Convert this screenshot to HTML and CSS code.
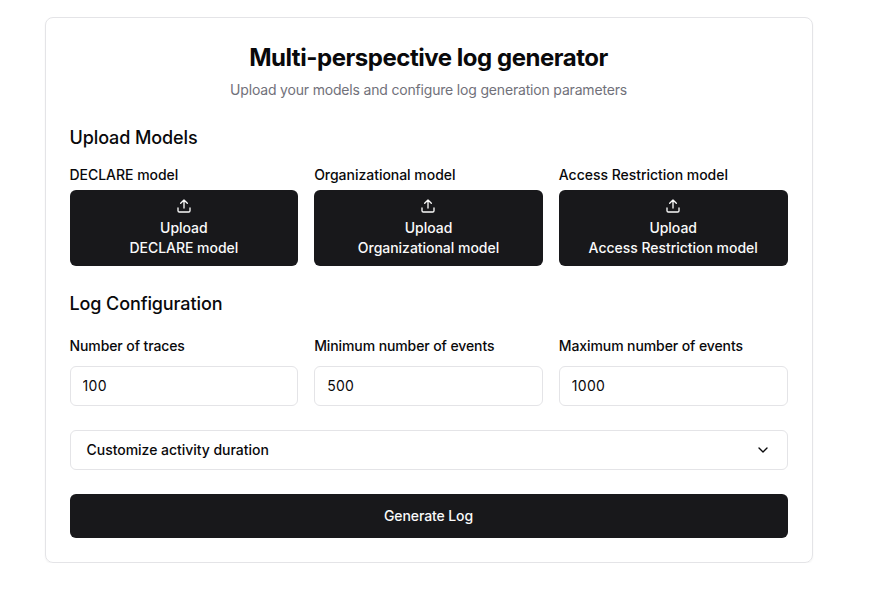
FILE: index.html
```html
<!DOCTYPE html>
<html lang="en">
<head>
<meta charset="utf-8">
<title>Multi-perspective log generator</title>
<link rel="stylesheet" href="styles.css">
</head>
<body>
<main class="card">
  <header>
    <h1>Multi-perspective log generator</h1>
    <p class="sub">Upload your models and configure log generation parameters</p>
  </header>
  <h2 class="h-models">Upload Models</h2>
  <div class="grid">
    <div><label>DECLARE model</label>
      <button class="upload"><svg viewBox="0 0 24 24"><path d="M21 15v4a2 2 0 0 1-2 2H5a2 2 0 0 1-2-2v-4M17 8l-5-5-5 5M12 3v12"/></svg><span>Upload</span><span>DECLARE model</span></button></div>
    <div><label>Organizational model</label>
      <button class="upload"><svg viewBox="0 0 24 24"><path d="M21 15v4a2 2 0 0 1-2 2H5a2 2 0 0 1-2-2v-4M17 8l-5-5-5 5M12 3v12"/></svg><span>Upload</span><span>Organizational model</span></button></div>
    <div><label>Access Restriction model</label>
      <button class="upload"><svg viewBox="0 0 24 24"><path d="M21 15v4a2 2 0 0 1-2 2H5a2 2 0 0 1-2-2v-4M17 8l-5-5-5 5M12 3v12"/></svg><span>Upload</span><span>Access Restriction model</span></button></div>
  </div>
  <h2 class="h-config">Log Configuration</h2>
  <div class="grid fields">
    <div><label>Number of traces</label><input value="100"></div>
    <div><label>Minimum number of events</label><input value="500"></div>
    <div><label>Maximum number of events</label><input value="1000"></div>
  </div>
  <button class="collapse"><span>Customize activity duration</span><svg viewBox="0 0 24 24"><path d="m6 9 6 6 6-6"/></svg></button>
  <button class="generate">Generate Log</button>
</main>
</body>
</html>
```
FILE: styles.css
```css
* { box-sizing: border-box; margin: 0; }
body { background: #fff; color: #09090b; font: 14px/20px Inter, sans-serif; letter-spacing: -.03px; padding: 17px 0 0 44.5px; }
.card { width: 768px; height: 546px; border: 1px solid #e4e4e7; border-radius: 8px; padding: 24px; box-shadow: 0 1px 2px rgba(0,0,0,.05); }
header { text-align: center; }
h1 { font-size: 24px; line-height: 32px; font-weight: 700; letter-spacing: -.47px; }
.sub { color: #71717a; margin-top: 6px; letter-spacing: -.18px; }
h2 { font-size: 18px; line-height: 28px; font-weight: 500; letter-spacing: -.11px; }
.h-models { margin-top: 24px; }
.grid { display: grid; grid-template-columns: repeat(3, minmax(0, 1fr)); gap: 16px; }
.h-models + .grid { margin-top: 13px; }
label { display: block; font-weight: 500; white-space: nowrap; }
button { font: inherit; letter-spacing: inherit; font-weight: 500; width: 100%; display: flex; align-items: center; border-radius: 6px; white-space: nowrap; }
svg { width: 16px; height: 16px; fill: none; stroke: currentColor; stroke-width: 2; stroke-linecap: round; stroke-linejoin: round; }
.upload { flex-direction: column; height: 76px; margin-top: 5px; border: 0; padding: 8px; background: #18181b; color: #fafafa; }
.upload svg { margin-bottom: 4px; }
.h-config { margin-top: 24px; }
.fields { margin-top: 18px; }
.fields label { letter-spacing: -.1px; }
input { width: 100%; height: 40px; display: block; margin-top: 10px; border: 1px solid #e4e4e7; border-radius: 6px; padding: 0 12px 1px; font: inherit; letter-spacing: .3px; color: inherit; background: #fff; }
.collapse { height: 40px; justify-content: space-between; margin-top: 24px; padding: 0 16px; border: 1px solid #e4e4e7; background: #fff; color: inherit; }
.generate { height: 44px; justify-content: center; margin-top: 24px; border: 0; background: #18181b; color: #fafafa; letter-spacing: -.1px; }
```
